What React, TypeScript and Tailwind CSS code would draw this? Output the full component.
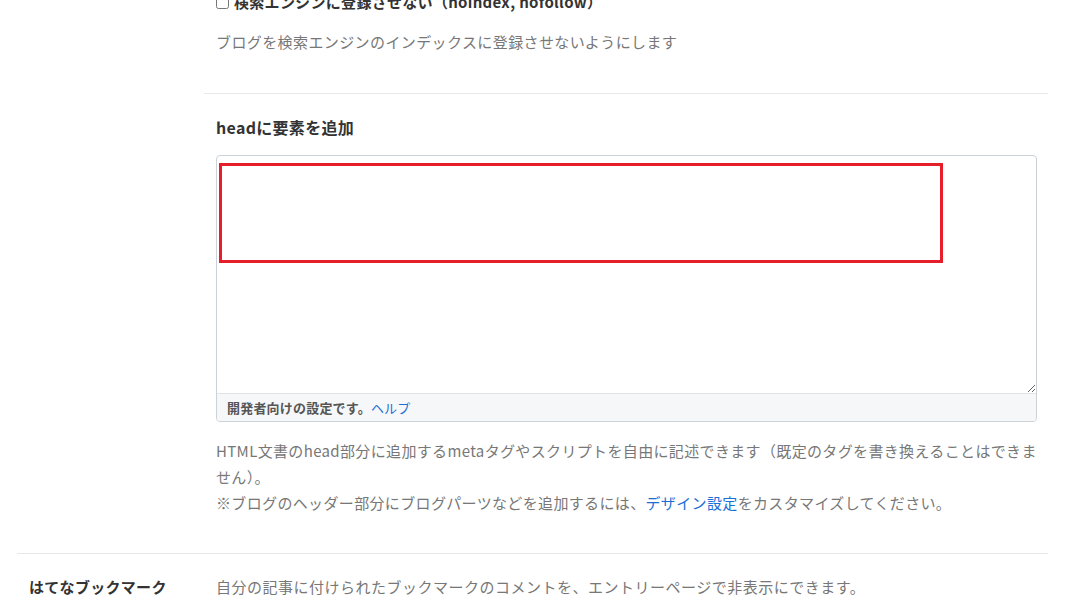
import React from "react";

const FONT = "font-['Noto_Sans_CJK_JP','Noto_Sans',sans-serif]";

function SubSection({ children, last }: { children: React.ReactNode; last?: boolean }) {
  return <div className={`pl-[12px] pr-[11px] ${last ? "border-t border-[#e6e9ec]" : ""}`}>{children}</div>;
}

export default function App() {
  return (
    <div className={`${FONT} bg-white w-[1072px] h-[603px] overflow-hidden text-[#333]`}>
      <div className="pl-[17px] pr-[24px]">
        {/* row: search engine + head */}
        <div className="flex">
          <div className="w-[187px] shrink-0" />
          <div className="flex-1">
            <SubSection>
              <label className="flex items-center gap-[5px] -mt-[9px] text-[15px] font-bold leading-[22px] tracking-[0.3px]">
                <input type="checkbox" className="w-[13px] h-[13px] m-0" />
                <span>検索エンジンに登録させない（noindex, nofollow）</span>
              </label>
              <p className="mt-[18px] pb-[40px] text-[15px] leading-[22px] tracking-[0.4px] text-[#777]">
                ブログを検索エンジンのインデックスに登録させないようにします
              </p>
            </SubSection>
            <SubSection last>
              <h3 className="pt-[21px] text-[16px] font-bold leading-[24px] tracking-[0.3px] text-[#333]">headに要素を追加</h3>
              <div className="relative mt-[16px] rounded-[4px] border border-[#cbd3d9] overflow-hidden">
                <textarea className="block w-full h-[237px] resize-y outline-none border-0 p-2 text-[14px]" />
                <div className="h-[28px] flex items-center pl-[10px] border-t border-[#dfe4e8] bg-[#f6f7f9] text-[13px] tracking-[0.2px]">
                  <span className="font-bold text-[#555]">開発者向けの設定です。</span>
                  <a className="text-[#1a6fd6]">ヘルプ</a>
                </div>
                <div className="absolute left-[2px] top-[7px] w-[724px] h-[100px] border-[3px] border-[#e61e2a] pointer-events-none" />
              </div>
              <div className="mt-[16px] pb-[37px] text-[15px] leading-[26px] tracking-[0.35px] text-[#777]">
                <p>HTML文書のhead部分に追加するmetaタグやスクリプトを自由に記述できます（既定のタグを書き換えることはできません）。</p>
                <p>
                  ※ブログのヘッダー部分にブログパーツなどを追加するには、
                  <a className="text-[#1a6fd6]">デザイン設定</a>
                  をカスタマイズしてください。
                </p>
              </div>
            </SubSection>
          </div>
        </div>
        {/* row: hatena bookmark */}
        <div className="flex border-t border-[#e6e9ec] pt-[21px]">
          <div className="w-[187px] shrink-0 pl-[12px] text-[15px] font-bold leading-[24px] tracking-[0.3px] text-[#333]">はてなブックマーク</div>
          <div className="flex-1 pl-[12px] text-[15px] leading-[24px] tracking-[0.5px] text-[#777]">
            自分の記事に付けられたブックマークのコメントを、エントリーページで非表示にできます。
          </div>
        </div>
      </div>
    </div>
  );
}
